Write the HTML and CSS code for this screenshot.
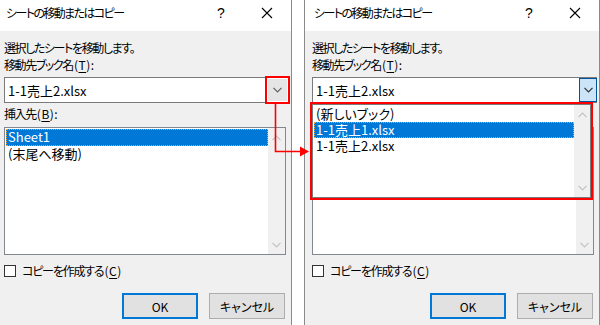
FILE: index.html
```html
<!DOCTYPE html>
<html lang="ja">

<head>
    <meta charset="UTF-8">
    <title>シートの移動またはコピー</title>
    <link rel="stylesheet" href="styles.css">
</head>

<body>
    <div class="stage">

        <!-- left: closed state -->
        <div class="dialog first">
            <div class="titlebar">
                <span class="title">シートの移動またはコピー</span>
                <span class="help">?</span>
                <svg class="close" width="12" height="12" viewBox="0 0 12 12">
                    <path d="M1 1 L11 11 M11 1 L1 11" stroke="#000" stroke-width="1.1" fill="none" />
                </svg>
            </div>
            <div class="body">
                <p class="line">選択したシートを移動します。</p>
                <p class="line">移動先ブック名<span class="key">(<u>T</u>):</span></p>
                <div class="combo">
                    <span class="value">1-1売上2.xlsx</span>
                    <span class="drop marked">
                        <svg width="9" height="6" viewBox="0 0 9 6">
                            <path d="M0.5 0.8 L4.5 4.8 L8.5 0.8" stroke="#606060" stroke-width="1.2" fill="none" />
                        </svg>
                    </span>
                </div>
                <p class="line label">挿入先<span class="key">(<u>B</u>):</span></p>
                <div class="listbox">
                    <div class="items">
                        <div class="item selected">Sheet1</div>
                        <div class="item">(末尾へ移動)</div>
                    </div>
                    <div class="scroll">
                        <svg width="9" height="6" viewBox="0 0 9 6">
                            <path d="M0.5 5.2 L4.5 1.2 L8.5 5.2" stroke="#c2c2c2" stroke-width="1.2" fill="none" />
                        </svg>
                        <svg width="9" height="6" viewBox="0 0 9 6">
                            <path d="M0.5 0.8 L4.5 4.8 L8.5 0.8" stroke="#c2c2c2" stroke-width="1.2" fill="none" />
                        </svg>
                    </div>
                </div>
                <div class="check">
                    <span class="box"></span>
                    <span class="check-text">コピーを作成する<span class="key">(<u>C</u>)</span></span>
                </div>
                <div class="buttons">
                    <button class="btn default">OK</button>
                    <button class="btn">キャンセル</button>
                </div>
            </div>
        </div>

        <!-- right: dropdown open -->
        <div class="dialog second">
            <div class="titlebar">
                <span class="title">シートの移動またはコピー</span>
                <span class="help">?</span>
                <svg class="close" width="12" height="12" viewBox="0 0 12 12">
                    <path d="M1 1 L11 11 M11 1 L1 11" stroke="#000" stroke-width="1.1" fill="none" />
                </svg>
            </div>
            <div class="body">
                <p class="line">選択したシートを移動します。</p>
                <p class="line">移動先ブック名<span class="key">(<u>T</u>):</span></p>
                <div class="combo open">
                    <span class="value">1-1売上2.xlsx</span>
                    <span class="drop">
                        <svg width="9" height="6" viewBox="0 0 9 6">
                            <path d="M0.5 0.8 L4.5 4.8 L8.5 0.8" stroke="#333" stroke-width="1.2" fill="none" />
                        </svg>
                    </span>
                    <div class="popup">
                        <div class="items">
                            <div class="item">(新しいブック)</div>
                            <div class="item selected">1-1売上1.xlsx</div>
                            <div class="item">1-1売上2.xlsx</div>
                        </div>
                        <div class="scroll">
                            <svg width="9" height="6" viewBox="0 0 9 6">
                                <path d="M0.5 5.2 L4.5 1.2 L8.5 5.2" stroke="#c2c2c2" stroke-width="1.2" fill="none" />
                            </svg>
                            <svg width="9" height="6" viewBox="0 0 9 6">
                                <path d="M0.5 0.8 L4.5 4.8 L8.5 0.8" stroke="#c2c2c2" stroke-width="1.2" fill="none" />
                            </svg>
                        </div>
                    </div>
                </div>
                <!-- covered by the open dropdown -->
                <p class="line label covered">挿入先<span class="key">(<u>B</u>):</span></p>
                <div class="listbox">
                    <div class="items"></div>
                    <div class="scroll">
                        <svg width="9" height="6" viewBox="0 0 9 6">
                            <path d="M0.5 5.2 L4.5 1.2 L8.5 5.2" stroke="#c2c2c2" stroke-width="1.2" fill="none" />
                        </svg>
                        <svg width="9" height="6" viewBox="0 0 9 6">
                            <path d="M0.5 0.8 L4.5 4.8 L8.5 0.8" stroke="#c2c2c2" stroke-width="1.2" fill="none" />
                        </svg>
                    </div>
                </div>
                <div class="check">
                    <span class="box"></span>
                    <span class="check-text">コピーを作成する<span class="key">(<u>C</u>)</span></span>
                </div>
                <div class="buttons">
                    <button class="btn default">OK</button>
                    <button class="btn">キャンセル</button>
                </div>
            </div>
        </div>

        <!-- annotation arrow -->
        <svg class="arrow" width="600" height="325" viewBox="0 0 600 325">
            <path d="M275.5 103 V151.5 H301" stroke="#ff0000" stroke-width="1.6" fill="none" />
            <path d="M300 146.5 L309 151.5 L300 156.5 Z" fill="#ff0000" />
        </svg>
    </div>
</body>

</html>
```

FILE: styles.css
```css
* {
    box-sizing: border-box;
}

body {
    margin: 0;
    background-color: #ffffff;
    font-family: "Noto Sans CJK JP", "Noto Sans", sans-serif;
    font-size: 12px;
    font-feature-settings: "palt";
    color: #000;
}

p {
    margin: 0;
}

.stage {
    position: relative;
    width: 600px;
    height: 325px;
    overflow: hidden;
    display: flex;
    gap: 12px;
}

.dialog {
    flex: none;
    width: 296px;
    height: 340px;
    border: 1px solid #8a8a8a;
    border-top: none;
    background-color: #f0f0f0;
}

.dialog.first {
    margin-left: -4px;
}

.titlebar {
    height: 31px;
    background-color: #ffffff;
    display: flex;
    align-items: flex-start;
    padding: 5px 0 0 9px;
    line-height: 16px;
}

.title {
    flex: 1;
    letter-spacing: -1.6px;
}

.help {
    font-size: 14px;
    width: 20px;
    text-align: center;
    margin-right: 30px;
    font-family: "Liberation Sans", sans-serif;
}

.close {
    margin: 2px 18px 0 0;
}

.body {
    padding: 8px 2px 0 7px;
}

.line {
    line-height: 17px;
    height: 17px;
    letter-spacing: -1.4px;
}

.line.label {
    margin-top: 2px;
}

.line.covered {
    visibility: hidden;
}

.key {
    letter-spacing: 0.5px;
    margin-left: 1px;
}

u {
    text-decoration-thickness: 1px;
    text-underline-offset: 2px;
}

/* combo box */
.combo {
    position: relative;
    margin-top: 4px;
    height: 26px;
    background-color: #fff;
    border: 1px solid #7a7a7a;
    display: flex;
    align-items: center;
}

.combo .value {
    flex: 1;
    padding-left: 3px;
    font-size: 13px;
}

.drop {
    width: 19px;
    height: 22px;
    margin-right: 1px;
    background-color: #e5e5e5;
    display: flex;
    align-items: center;
    justify-content: center;
}

.drop.marked {
    outline: 2px solid #ff0000;
    outline-offset: 1px;
}

.combo.open .drop {
    background-color: #cce4f7;
    border: 1px solid #005499;
    width: 18px;
    height: 24px;
    margin-right: -1px;
}

.popup {
    position: absolute;
    left: -1px;
    top: 26px;
    width: 279px;
    height: 94px;
    background-color: #fff;
    border: 1px solid #7a7a7a;
    outline: 2px solid #ff0000;
    outline-offset: 0;
    display: flex;
    z-index: 2;
}

/* list box */
.listbox {
    margin-top: 5px;
    margin-right: 3px;
    height: 128px;
    background-color: #fff;
    border: 1px solid #828790;
    display: flex;
}

.items {
    flex: 1;
    padding: 1px 0 0 1px;
}

.item {
    height: 17px;
    line-height: 16px;
    padding-left: 2px;
    font-size: 13px;
    white-space: nowrap;
}

.popup .item {
    height: 16px;
    line-height: 15px;
}

.item.selected {
    background-color: #0078d7;
    color: #fff;
    outline: 1px dotted #f3a33a;
    outline-offset: -1px;
}

.scroll {
    width: 17px;
    background-color: #f0f0f0;
    display: flex;
    flex-direction: column;
    justify-content: space-between;
    align-items: center;
    padding: 7px 0 6px;
}

.popup .scroll {
    width: 16px;
}

/* checkbox */
.check {
    margin-top: 9px;
    height: 13px;
    display: flex;
    align-items: center;
    gap: 6px;
    line-height: 13px;
}

.check-text {
    letter-spacing: -1.2px;
}

.box {
    width: 12px;
    height: 12px;
    border: 1px solid #333;
    background-color: #fff;
}

/* buttons */
.buttons {
    margin-top: 16px;
    margin-right: 4px;
    display: flex;
    justify-content: flex-end;
    gap: 11px;
}

.btn {
    width: 76px;
    height: 26px;
    background-color: #e1e1e1;
    border: 1px solid #adadad;
    font-family: inherit;
    font-size: 12px;
    font-feature-settings: "palt";
    padding: 0;
    color: #000;
}

.btn.default {
    border: 2px solid #0078d7;
}

.arrow {
    position: absolute;
    left: 0;
    top: 0;
    pointer-events: none;
}
```
